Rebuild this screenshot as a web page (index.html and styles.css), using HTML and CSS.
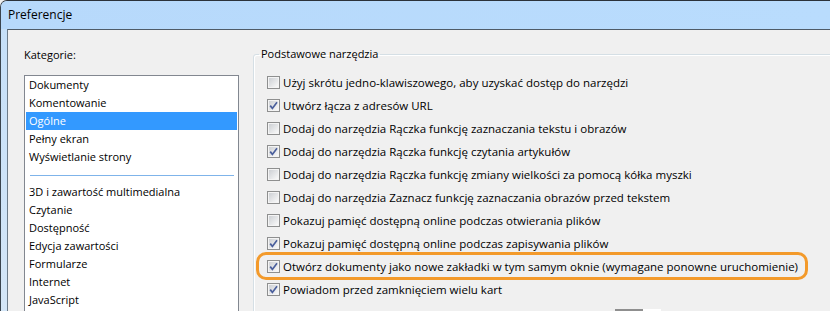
FILE: index.html
```html
<!DOCTYPE html>
<html lang="pl">
<head>
    <meta charset="UTF-8">
    <title>Preferencje</title>
    <link rel="stylesheet" href="styles.css">
</head>
<body>
<div class="window">
    <div class="titlebar">Preferencje</div>
    <div class="client">
        <div class="cats">
            <div class="cats-label">Kategorie:</div>
            <div class="catlist">
                <div class="cat">Dokumenty</div>
                <div class="cat">Komentowanie</div>
                <div class="cat sel">Ogólne</div>
                <div class="cat">Pełny ekran</div>
                <div class="cat">Wyświetlanie strony</div>
                <div class="sep"></div>
                <div class="cat">3D i zawartość multimedialna</div>
                <div class="cat">Czytanie</div>
                <div class="cat">Dostępność</div>
                <div class="cat">Edycja zawartości</div>
                <div class="cat">Formularze</div>
                <div class="cat">Internet</div>
                <div class="cat">JavaScript</div>
            </div>
        </div>
        <fieldset class="group">
            <legend>Podstawowe narzędzia</legend>
            <div class="opts">
                <div class="row"><span class="cb"></span>Użyj skrótu jedno-klawiszowego, aby uzyskać dostęp do narzędzi</div>
                <div class="row"><span class="cb"><svg viewBox="0 0 9 9"><path d="M1.2 4.6 L3.4 7.4 L8 1.2"/></svg></span>Utwórz łącza z adresów URL</div>
                <div class="row"><span class="cb"></span>Dodaj do narzędzia Rączka funkcję zaznaczania tekstu i obrazów</div>
                <div class="row"><span class="cb"><svg viewBox="0 0 9 9"><path d="M1.2 4.6 L3.4 7.4 L8 1.2"/></svg></span>Dodaj do narzędzia Rączka funkcję czytania artykułów</div>
                <div class="row"><span class="cb"></span>Dodaj do narzędzia Rączka funkcję zmiany wielkości za pomocą kółka myszki</div>
                <div class="row"><span class="cb"></span>Dodaj do narzędzia Zaznacz funkcję zaznaczania obrazów przed tekstem</div>
                <div class="row"><span class="cb"></span>Pokazuj pamięć dostępną online podczas otwierania plików</div>
                <div class="row"><span class="cb"><svg viewBox="0 0 9 9"><path d="M1.2 4.6 L3.4 7.4 L8 1.2"/></svg></span>Pokazuj pamięć dostępną online podczas zapisywania plików</div>
                <div class="row hl"><span class="cb"><svg viewBox="0 0 9 9"><path d="M1.2 4.6 L3.4 7.4 L8 1.2"/></svg></span>Otwórz dokumenty jako nowe zakładki w tym samym oknie (wymagane ponowne uruchomienie)</div>
                <div class="row"><span class="cb"><svg viewBox="0 0 9 9"><path d="M1.2 4.6 L3.4 7.4 L8 1.2"/></svg></span>Powiadom przed zamknięciem wielu kart</div>
                <div class="more"></div>
            </div>
        </fieldset>
    </div>
</div>
</body>
</html>
```

FILE: styles.css
```css
html, body{
    margin:0;
    padding:0;
    background:#f0f0f0;
}
body{
    font-family:"Open Sans", "Noto Sans", sans-serif;
    font-size:11px;
    color:#000;
}
.window{
    width:830px;
    height:311px;
    box-sizing:border-box;
    border-top:1px solid #2b323a;
    border-left:1px solid #3a444e;
    border-top-left-radius:7px;
    background:linear-gradient(to bottom, #c4dff9, #d4e6f7);
    overflow:hidden;
    display:flex;
    flex-direction:column;
}
.titlebar{
    height:28px;
    line-height:28px;
    padding-left:7px;
    font-size:12px;
    background:linear-gradient(to right, #b7d9fb, #b9dcfd);
    flex:none;
}
.client{
    flex:1;
    margin-left:6px;
    border-top:1px solid #4f5b67;
    border-left:1px solid #6d7c8a;
    background:#f0f0f0;
    display:flex;
    overflow:hidden;
}

/* left column */
.cats{
    padding:16px 0 0 16px;
    flex:none;
}
.cats-label{
    line-height:18px;
    margin-bottom:11px;
}
.catlist{
    width:215px;
    height:260px;
    box-sizing:border-box;
    border:1px solid #828790;
    background:#fff;
    padding:0 1px;
}
.cat{
    height:18px;
    line-height:18px;
    padding-left:3px;
    white-space:nowrap;
}
.cat.sel{
    background:#3399ff;
    color:#fff;
}
.sep{
    height:1px;
    margin:9px 3px 7px 4px;
    background:#7fb4ea;
}

/* right group */
.group{
    flex:none;
    width:620px;
    height:400px;
    margin:15px 0 0 14px;
    padding:0;
    border:1px solid #d5dfe5;
    border-radius:3px;
    box-shadow:inset 1px 1px 0 #fff;
}
.group legend{
    margin-left:5px;
    padding:0 2px;
    line-height:18px;
}
.opts{
    padding:8px 0 0 13px;
    font-size:11.5px;
}
.row{
    height:23px;
    display:flex;
    align-items:center;
    white-space:nowrap;
    position:relative;
}
.cb{
    width:13px;
    height:13px;
    box-sizing:border-box;
    border:1px solid #8e8f8f;
    padding:1px;
    margin-right:3px;
    flex:none;
    background:linear-gradient(135deg, #cdd0d4, #f9f9f9) content-box, #f4f4f4;
}
.cb svg{
    display:block;
    width:9px;
    height:9px;
    fill:none;
    stroke:#4a5f9c;
    stroke-width:1.7;
}
.row.hl::after{
    content:"";
    position:absolute;
    left:-11px;
    top:-3px;
    width:552px;
    height:28px;
    box-sizing:border-box;
    border:3px solid #f39a2b;
    border-radius:10px;
}
.more{
    margin:8px 0 0 348px;
    width:46px;
    height:3px;
    background:linear-gradient(to right, #8f8f8f 28px, #fff 28px);
}
```
